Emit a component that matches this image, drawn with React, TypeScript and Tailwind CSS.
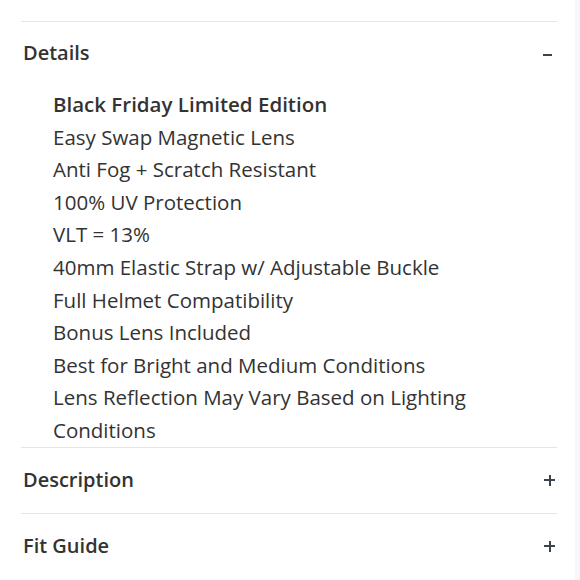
import React from "react";

const items = [
  "Easy Swap Magnetic Lens",
  "Anti Fog + Scratch Resistant",
  "100% UV Protection",
  "VLT = 13%",
  "40mm Elastic Strap w/ Adjustable Buckle",
  "Full Helmet Compatibility",
  "Bonus Lens Included",
  "Best for Bright and Medium Conditions",
  "Lens Reflection May Vary Based on Lighting Conditions",
];

function Plus() {
  return (
    <span className="relative block w-[11px] h-[11px]">
      <span className="absolute left-0 top-[4.5px] w-[11px] h-[2px] bg-[#3c4350]" />
      <span className="absolute top-0 left-[4.5px] w-[2px] h-[11px] bg-[#3c4350]" />
    </span>
  );
}

export default function App() {
  return (
    <div
      className="w-[580px] h-[580px] bg-white overflow-hidden flex"
      style={{ fontFamily: "'Open Sans', 'Noto Sans', sans-serif" }}
    >
      <div className="flex-1 pl-[21px] pr-[18px] pt-[21px] text-[#333333]">
        <div className="border-t border-[#e4e4ea]">
          <div className="h-[62px] flex items-center justify-between pl-[2px]">
            <span className="text-[20px] font-semibold">Details</span>
            <span className="block w-[9px] h-[2px] bg-[#3c4350] mr-[5px] mt-[4px]" />
          </div>
          <ul className="pl-[32px] pt-[4px] text-[20.5px] leading-[32.6px] max-w-[480px]">
            <li className="font-semibold">Black Friday Limited Edition</li>
            {items.map((t) => (
              <li key={t}>{t}</li>
            ))}
          </ul>
        </div>
        <div className="border-t border-[#e4e4ea] h-[66px] flex items-center justify-between pl-[2px]">
          <span className="text-[20px] font-semibold">Description</span>
          <span className="mr-[2px]"><Plus /></span>
        </div>
        <div className="border-t border-[#e4e4ea] h-[66px] flex items-center justify-between pl-[2px]">
          <span className="text-[20px] font-semibold">Fit Guide</span>
          <span className="mr-[2px]"><Plus /></span>
        </div>
      </div>
      <div className="w-[5px] h-full bg-[#f7f7f9]" />
    </div>
  );
}
